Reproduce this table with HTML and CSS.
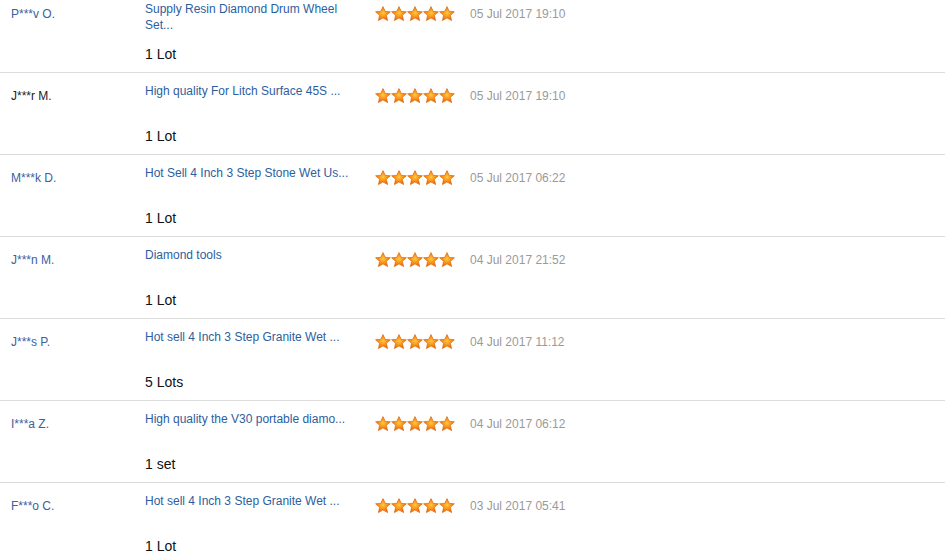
FILE: index.html
```html
<!DOCTYPE html>
<html>
<head>
<meta charset="utf-8">
<link rel="stylesheet" href="styles.css">
</head>
<body>
<svg class="defs" width="0" height="0" aria-hidden="true">
  <defs>
    <radialGradient id="sg" cx="0.5" cy="0.45" r="0.6">
      <stop offset="0" stop-color="#ffc83a"/>
      <stop offset="0.5" stop-color="#f7901c"/>
      <stop offset="1" stop-color="#e2600a"/>
    </radialGradient>
    <symbol id="star" viewBox="0 0 16 16">
      <path d="M8 0.6 L10.2 5.3 L15.4 5.8 L11.4 9.3 L12.6 14.6 L8 11.9 L3.4 14.6 L4.6 9.3 L0.6 5.8 L5.8 5.3 Z" fill="url(#sg)" stroke="#dc6a10" stroke-width="0.7" stroke-linejoin="round"/>
    </symbol>
  </defs>
</svg>
<div class="list">
  <div class="row">
    <div class="name">P***v O.</div>
    <div class="product">
      <div class="title">Supply Resin Diamond Drum Wheel Set...</div>
      <div class="qty">1 Lot</div>
    </div>
    <div class="stars"><svg><use href="#star"/></svg><svg><use href="#star"/></svg><svg><use href="#star"/></svg><svg><use href="#star"/></svg><svg><use href="#star"/></svg></div>
    <div class="date">05 Jul 2017 19:10</div>
  </div>
  <div class="row">
    <div class="name dark">J***r M.</div>
    <div class="product">
      <div class="title">High quality For Litch Surface 45S ...</div>
      <div class="qty">1 Lot</div>
    </div>
    <div class="stars"><svg><use href="#star"/></svg><svg><use href="#star"/></svg><svg><use href="#star"/></svg><svg><use href="#star"/></svg><svg><use href="#star"/></svg></div>
    <div class="date">05 Jul 2017 19:10</div>
  </div>
  <div class="row">
    <div class="name">M***k D.</div>
    <div class="product">
      <div class="title">Hot Sell 4 Inch 3 Step Stone Wet Us...</div>
      <div class="qty">1 Lot</div>
    </div>
    <div class="stars"><svg><use href="#star"/></svg><svg><use href="#star"/></svg><svg><use href="#star"/></svg><svg><use href="#star"/></svg><svg><use href="#star"/></svg></div>
    <div class="date">05 Jul 2017 06:22</div>
  </div>
  <div class="row">
    <div class="name">J***n M.</div>
    <div class="product">
      <div class="title">Diamond tools</div>
      <div class="qty">1 Lot</div>
    </div>
    <div class="stars"><svg><use href="#star"/></svg><svg><use href="#star"/></svg><svg><use href="#star"/></svg><svg><use href="#star"/></svg><svg><use href="#star"/></svg></div>
    <div class="date">04 Jul 2017 21:52</div>
  </div>
  <div class="row">
    <div class="name">J***s P.</div>
    <div class="product">
      <div class="title">Hot sell 4 Inch 3 Step Granite Wet ...</div>
      <div class="qty">5 Lots</div>
    </div>
    <div class="stars"><svg><use href="#star"/></svg><svg><use href="#star"/></svg><svg><use href="#star"/></svg><svg><use href="#star"/></svg><svg><use href="#star"/></svg></div>
    <div class="date">04 Jul 2017 11:12</div>
  </div>
  <div class="row">
    <div class="name">I***a Z.</div>
    <div class="product">
      <div class="title">High quality the V30 portable diamo...</div>
      <div class="qty">1 set</div>
    </div>
    <div class="stars"><svg><use href="#star"/></svg><svg><use href="#star"/></svg><svg><use href="#star"/></svg><svg><use href="#star"/></svg><svg><use href="#star"/></svg></div>
    <div class="date">04 Jul 2017 06:12</div>
  </div>
  <div class="row">
    <div class="name">F***o C.</div>
    <div class="product">
      <div class="title">Hot sell 4 Inch 3 Step Granite Wet ...</div>
      <div class="qty">1 Lot</div>
    </div>
    <div class="stars"><svg><use href="#star"/></svg><svg><use href="#star"/></svg><svg><use href="#star"/></svg><svg><use href="#star"/></svg><svg><use href="#star"/></svg></div>
    <div class="date">03 Jul 2017 05:41</div>
  </div>
</div>
</body>
</html>
```

FILE: styles.css
```css
html, body {
  margin: 0;
  padding: 0;
  background: #fff;
  font-family: "Liberation Sans", Arial, sans-serif;
  overflow: hidden;
}

.defs {
  display: block;
  width: 0;
  height: 0;
  overflow: hidden;
}

.list {
  margin-top: -9px;
}

.row {
  display: flex;
  height: 81px;
  border-bottom: 1px solid #dcdcdc;
  box-sizing: content-box;
}

.name {
  width: 134px;
  padding-left: 11px;
  padding-top: 15px;
  font-size: 12px;
  line-height: 16px;
  color: #3a61a0;
}

.name.dark {
  color: #222;
}

.product {
  width: 230px;
  padding-top: 10px;
}

.title {
  width: 210px;
  height: 32px;
  font-size: 12px;
  line-height: 16px;
  color: #2d5e9e;
  overflow: hidden;
}

.qty {
  margin-top: 12px;
  font-size: 14px;
  line-height: 18px;
  color: #111;
}

.stars {
  display: flex;
  width: 95px;
  padding-top: 15px;
  height: 16px;
}

.stars svg {
  width: 16px;
  height: 16px;
}

.date {
  padding-top: 15px;
  font-size: 12px;
  line-height: 16px;
  color: #9a9a9a;
}
```
